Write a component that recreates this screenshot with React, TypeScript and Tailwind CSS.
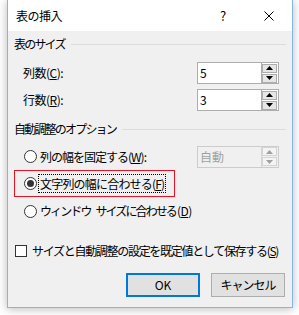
import React from 'react';

const font = { fontFamily: '"Noto Sans CJK JP", "Noto Sans", sans-serif' };

// small up/down arrows of the number box
const Spinner: React.FC<{ disabled?: boolean }> = ({ disabled }) => {
  const fill = disabled ? '#a0a0a0' : '#000';
  const box = disabled ? 'border-[#d4d4d4] bg-[#f4f4f4]' : 'border-[#adadad] bg-[#e6e6e6]';
  return (
    <div className="flex flex-col gap-px pr-px py-px">
      <div className={`w-[15px] h-[9px] border flex items-center justify-center ${box}`}>
        <svg width="7" height="4" viewBox="0 0 7 4"><path d="M0 4 L3.5 0 L7 4 Z" fill={fill} /></svg>
      </div>
      <div className={`w-[15px] h-[9px] border flex items-center justify-center ${box}`}>
        <svg width="7" height="4" viewBox="0 0 7 4"><path d="M0 0 L3.5 4 L7 0 Z" fill={fill} /></svg>
      </div>
    </div>
  );
};

const NumberBox: React.FC<{ value: string; disabled?: boolean }> = ({ value, disabled }) => (
  <div
    className={`ml-auto mr-[13px] w-[82px] h-[22px] border flex items-center ${
      disabled ? 'border-[#cccccc] bg-[#f0f0f0] text-[#a0a0a0]' : 'border-[#adadad] bg-white text-black'
    }`}
  >
    <span className="flex-1 pl-[2px] text-[12px] leading-none">{value}</span>
    <div className={`h-full border-l ${disabled ? 'border-[#d4d4d4]' : 'border-[#adadad]'}`} />
    <Spinner disabled={disabled} />
  </div>
);

const Radio: React.FC<{ checked?: boolean }> = ({ checked }) => (
  <div className="w-[13px] h-[13px] rounded-full border border-[#333] bg-white flex items-center justify-center shrink-0">
    {checked && <div className="w-[7px] h-[7px] rounded-full bg-[#333]" />}
  </div>
);

const SectionHeader: React.FC<{ title: string }> = ({ title }) => (
  <div className="flex items-center h-4 pl-[6px] mr-[6px]">
    <span className="text-[12px] leading-none whitespace-nowrap tracking-[-1.8px]">{title}</span>
    <div className="flex-1 ml-[6px] h-px bg-[#dcdcdc]" />
  </div>
);

const App: React.FC = () => {
  return (
    <div className="w-[299px] h-[315px] bg-white overflow-hidden" style={font}>
      <div className="ml-[7px] w-[286px] h-[308px] border-x border-b border-[#85b5e6] bg-[#f0f0f0] text-black shadow-[0_1px_9px_rgba(0,0,0,0.28)] flex flex-col">
        {/* title bar */}
        <div className="h-[31px] bg-white flex items-center shrink-0">
          <span className="pl-[8px] text-[12px] tracking-[-0.5px]">表の挿入</span>
          <span className="ml-auto w-[46px] text-center text-[13px]">?</span>
          <div className="w-[46px] flex justify-center">
            <svg width="10" height="10" viewBox="0 0 10 10">
              <path d="M0.5 0.5 L9.5 9.5 M9.5 0.5 L0.5 9.5" stroke="#000" strokeWidth="1" />
            </svg>
          </div>
        </div>

        <div className="mt-[5px]">
          <SectionHeader title="表のサイズ" />
        </div>

        <div className="mt-[10px] flex items-center pl-[15px]">
          <span className="text-[12px] tracking-[-0.5px]">列数(<span className="underline">C</span>):</span>
          <NumberBox value="5" />
        </div>
        <div className="mt-[5px] flex items-center pl-[15px]">
          <span className="text-[12px] tracking-[-0.5px]">行数(<span className="underline">R</span>):</span>
          <NumberBox value="3" />
        </div>

        <div className="mt-[10px]">
          <SectionHeader title="自動調整のオプション" />
        </div>

        <div className="mt-[9px] flex items-center pl-[16px] h-[21px]">
          <Radio />
          <span className="ml-[3px] text-[12px] tracking-[-1px] whitespace-nowrap">
            列の幅を固定する(<span className="underline">W</span>):
          </span>
          <NumberBox value="自動" disabled />
        </div>

        <div className="mt-[3px] ml-[6px] w-[161px] h-[27px] border border-[#e81123] flex items-center pl-[9px]">
          <Radio checked />
          <span className="ml-px px-[1px] border border-dotted border-black text-[12px] leading-[17px] tracking-[-0.8px] whitespace-nowrap">
            文字列の幅に合わせる(<span className="underline">F</span>)
          </span>
        </div>

        <div className="mt-[4px] flex items-center pl-[16px] h-[20px]">
          <Radio />
          <span className="ml-[3px] text-[12px] tracking-[-1.9px] whitespace-nowrap">ウィンドウ</span>
          <span className="ml-[5px] text-[12px] tracking-[-1.9px] whitespace-nowrap">サイズに合わせる</span>
          <span className="ml-px text-[12px] tracking-[-0.5px] whitespace-nowrap">
            (<span className="underline">D</span>)
          </span>
        </div>

        <div className="mt-[21px] flex items-center pl-[7px] h-[17px]">
          <div className="w-3 h-3 border border-[#333] bg-white shrink-0" />
          <span className="ml-[5px] text-[12px] tracking-[-1.3px] whitespace-nowrap">
            サイズと自動調整の設定を既定値として保存する(<span className="underline">S</span>)
          </span>
        </div>

        <div className="mt-[14px] flex justify-end gap-[11px] mr-[7px]">
          <button className="w-[74px] h-[24px] border-2 border-[#0078d7] bg-[#e1e1e1] text-[12px]">OK</button>
          <button className="w-[74px] h-[24px] border border-[#adadad] bg-[#e1e1e1] text-[12px] tracking-[-1px]">キャンセル</button>
        </div>
      </div>
    </div>
  );
};

export default App;
